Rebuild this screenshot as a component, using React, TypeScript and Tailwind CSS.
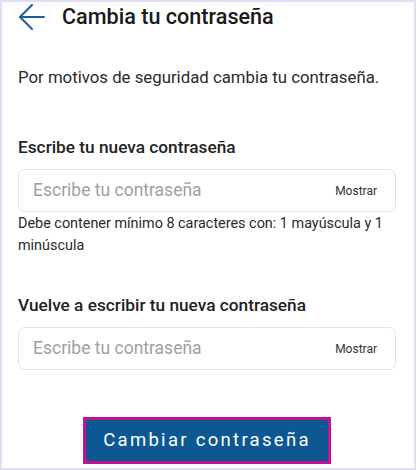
import React from "react";

function Field({ label, helper, top }: { label: string; helper?: React.ReactNode; top: string }) {
  return (
    <div className={`flex flex-col ${top}`}>
      <div className="ml-[16px] text-[17.25px] leading-[24px] font-medium text-[#222222]">{label}</div>
      <div className="mt-[10px] ml-[16px] w-[378px] h-[43px] rounded-[7px] border border-[#e3e3e3] flex items-center justify-between pl-[14px] pr-[18px]">
        <span className="text-[17.5px] text-[#a0a0a0]">Escribe tu contraseña</span>
        <span className="text-[12px] text-[#333333]">Mostrar</span>
      </div>
      {helper}
    </div>
  );
}

export default function App() {
  return (
    <div
      className="w-[416px] h-[470px] border-2 border-[#e1def3] bg-white flex flex-col"
      style={{ fontFamily: "Roboto, 'Noto Sans', sans-serif" }}
    >
      <div className="mt-[2px] h-[26px] flex items-center">
        <svg className="ml-[17px]" width="26" height="26" viewBox="0 0 26 26" fill="none" stroke="#1c5d9a" strokeWidth="2" strokeLinecap="round" strokeLinejoin="round">
          <path d="M13 1 L1 13 L13 25" />
          <path d="M1 13 H25" />
        </svg>
        <span className="ml-[17px] text-[21.6px] leading-[26px] font-medium text-[#1a1a1a]">Cambia tu contraseña</span>
      </div>
      <p className="mt-[35px] ml-[16px] text-[16.8px] leading-[24px] text-[#2a2a2a]">
        Por motivos de seguridad cambia tu contraseña.
      </p>
      <Field
        label="Escribe tu nueva contraseña"
        top="mt-[46px]"
        helper={
          <p className="mt-[1px] ml-[16px] w-[380px] text-[14.4px] leading-[22px] text-[#2a2a2a]">
            Debe contener mínimo 8 caracteres con: 1 mayúscula y 1 minúscula
          </p>
        }
      />
      <Field label="Vuelve a escribir tu nueva contraseña" top="mt-[36px]" />
      <div className="mt-[47px] flex justify-center">
        <button className="ml-[-2px] w-[248px] h-[47px] border-[3px] border-[#c3128f] bg-[#0b5892] text-white text-[18.5px] tracking-[2.3px] flex items-center justify-center">
          Cambiar contraseña
        </button>
      </div>
    </div>
  );
}
